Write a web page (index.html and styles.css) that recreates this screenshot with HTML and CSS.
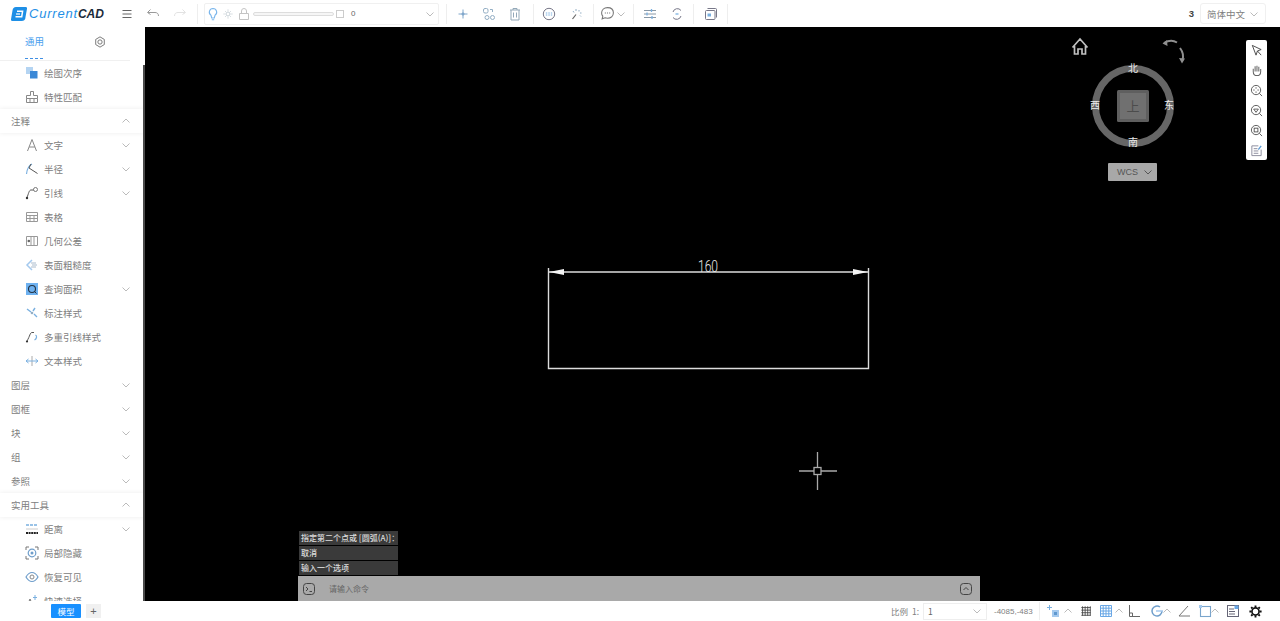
FILE: index.html
```html
<!DOCTYPE html>
<html lang="zh">
<head>
<meta charset="utf-8">
<title>CurrentCAD</title>
<link rel="stylesheet" href="styles.css">
</head>
<body>
<svg class="sprite" width="0" height="0">
  <defs>
    <symbol id="down" viewBox="0 0 10 10"><path d="M1.500 3.500 5 7l3.500-3.500" fill="none" stroke="currentColor"/></symbol>
    <symbol id="up" viewBox="0 0 10 10"><path d="M1.500 6.500 5 3l3.500 3.500" fill="none" stroke="currentColor"/></symbol>
  </defs>
</svg>
<div class="app">
  <header class="topbar">
    <div class="logo">
      <svg class="logo-mark" viewBox="0 0 16 14"><path d="M5 0h9.500a1.500 1.500 0 0 1 1.500 1.800L14.500 10a4 4 0 0 1-4 4H1.500A1.500 1.500 0 0 1 0 12.200L1.500 3.500A4 4 0 0 1 5 0z" fill="#1e8fe6"/><path d="M4.500 9.800h6.200l.9-5.600H6" fill="none" stroke="#fff" stroke-width="1.500"/><path d="M5 7h4" stroke="#fff" stroke-width="1.200"/></svg>
      <span class="logo-a">Current</span><span class="logo-b">CAD</span>
    </div>
    <button class="tool menu"><svg viewBox="0 0 14 14" class="i"><path d="M2.500 3.500h9M2.500 7h9M2.500 10.500h9" stroke="#666" stroke-width="1.100"/></svg></button>
    <button class="tool undo"><svg viewBox="0 0 14 14" class="i"><path d="M4.500 2.500 1.500 5.500l3 2M2 5.500h7c2 0 3.500 1 3.500 3.500" fill="none" stroke="#999"/></svg></button>
    <button class="tool"><svg viewBox="0 0 14 14" class="i"><path d="M9.500 2.500l3 3-3 2M12 5.500H5C3 5.500 1.500 6.500 1.500 9" fill="none" stroke="#e2e2e2"/></svg></button>
    <span class="sep sep-a"></span>
    <div class="layer">
      <svg viewBox="0 0 14 14" class="i"><path d="M7 1.500a3.700 3.700 0 0 0-2 6.800L5.700 11h2.600L9 8.300a3.700 3.700 0 0 0-2-6.800zM5.800 12.800h2.400" fill="none" stroke="#7ab6ec" stroke-width="1.100"/></svg>
      <svg viewBox="0 0 14 14" class="i sun"><path d="M7 1.500v11M1.500 7h11M3.500 3.500l7 7M10.500 3.500l-7 7" stroke="#d2dade"/><circle cx="7" cy="7" r="2" fill="#fff" stroke="#d2dade"/></svg>
      <svg viewBox="0 0 14 14" class="i lock"><path d="M2.500 6.500h9v6h-9zM4.500 6.500V4a2.500 2.500 0 0 1 5 0v2.500" fill="none" stroke="#c4c4c4"/></svg>
      <span class="slider"></span>
      <span class="swatch"></span>
      <span class="layer-name">0</span>
      <svg class="chev layer-chev"><use href="#down"/></svg>
    </div>
    <span class="sep sep-b"></span>
    <button class="tool w26 first"><svg viewBox="0 0 14 14" class="i"><path d="M7 2.500v9M2.500 7h9" stroke="#7fa6cb"/><path d="M5.500 7h3M7 5.500v3" stroke="#7fa6cb" stroke-width="1.600"/></svg></button>
    <button class="tool w26"><svg viewBox="0 0 14 14" class="i"><g fill="none" stroke="#93aec4"><rect x="1.500" y="1.500" width="4.500" height="4.500" rx="1.500"/><circle cx="5" cy="10.500" r="2"/><circle cx="10.500" cy="10.500" r="2"/><path d="M8 2.500h2.500V5"/></g></svg></button>
    <button class="tool w26"><svg viewBox="0 0 14 14" class="i"><path d="M2 3h10M5 3V1.500h4V3M3 3v10h8V3M5.500 5.500v5M8.500 5.500v5" fill="none" stroke="#93a8b8"/></svg></button>
    <span class="sep sep-c"></span>
    <button class="tool w28"><svg viewBox="0 0 14 14" class="i"><circle cx="7" cy="7" r="5.700" fill="none" stroke="#778"/><path d="M3.800 6h6.400M3.800 8h6.400" stroke="#7ab0e0" stroke-dasharray="1.500 1"/></svg></button>
    <button class="tool w28"><svg viewBox="0 0 14 14" class="i"><path d="M6 7.500 2.500 12" stroke="#666" stroke-width="1.200"/><path d="M6 2v2M3 4l1 1.500M9 3v1.500M11.500 6H10M11 9.500l-1-1" stroke="#93aec4"/></svg></button>
    <span class="sep sep-d"></span>
    <button class="tool chat"><svg viewBox="0 0 14 14" class="i big"><path d="M7 1.500c-3.200 0-5.500 2-5.500 5 0 1.200.4 2.200 1.100 3l-.6 2.500 2.700-1c.7.300 1.400.4 2.300.4 3.200 0 5.500-2 5.500-5s-2.300-4.900-5.500-4.900z" fill="none" stroke="#777"/><path d="M4.500 6.500h1M6.500 6.500h1M8.500 6.500h1" stroke="#777"/></svg></button>
    <svg class="chev chat-chev"><use href="#down"/></svg>
    <span class="sep sep-e"></span>
    <button class="tool w26 first-f"><svg viewBox="0 0 14 14" class="i"><path d="M1 3.500h12M1 7h12M1 10.500h12" stroke="#8a98a5"/><path d="M8.500 2v3M4 5.500v3M9 9v3" stroke="#7ab0e0" stroke-width="1.300"/></svg></button>
    <button class="tool w26 second-f"><svg viewBox="0 0 14 14" class="i"><path d="M3 5a4.500 4.500 0 0 1 8-1.500M11 9a4.500 4.500 0 0 1-8 1.500" fill="none" stroke="#778"/><path d="M5.500 7h3" stroke="#7ab0e0" stroke-width="1.300"/></svg></button>
    <span class="sep sep-f"></span>
    <button class="tool w26 first-g"><svg viewBox="0 0 14 14" class="i"><path d="M3.500 1.500h8a1 1 0 0 1 1 1v8" fill="none" stroke="#778"/><rect x="1.500" y="3.500" width="9.500" height="9" rx="1" fill="none" stroke="#778"/><rect x="3.500" y="6.500" width="3.500" height="3" fill="#7ab0e0"/></svg></button>
    <span class="sep sep-g"></span>
    <div class="lang-wrap">
      <span class="count">3</span>
      <div class="lang"><span>简体中文</span><svg class="chev"><use href="#down"/></svg></div>
    </div>
  </header>

  <div class="main">
    <aside class="side">
      <div class="tabs">
        <span class="tab-active">通用</span>
        <svg viewBox="0 0 14 14" class="i tab-gear"><path d="M7 1 12 4v6l-5 3-5-3V4z" fill="none" stroke="#666"/><circle cx="7" cy="7" r="2.500" fill="none" stroke="#666"/></svg>
      </div>
      <div class="item"><svg viewBox="0 0 14 14" class="i"><rect x="1" y="1" width="7" height="7" fill="#b4d4f2"/><rect x="5" y="5" width="7.500" height="7.500" fill="#3a88d6"/></svg><span>绘图次序</span></div>
      <div class="item"><svg viewBox="0 0 14 14" class="i"><path d="M5.500 1.500h3v4h4v3h-11v-3h4zM1.500 8.500v4h11v-4M5 8.500v4M9 8.500v4" fill="none" stroke="#888"/></svg><span>特性匹配</span></div>
      <div class="sec open"><span>注释</span><svg class="chev"><use href="#up"/></svg></div>
      <div class="item"><svg viewBox="0 0 14 14" class="i"><path d="M2.500 13 7 1.500l4.500 11.500M4.200 9h5.600" fill="none" stroke="#888"/></svg><span>文字</span><svg class="chev"><use href="#down"/></svg></div>
      <div class="item"><svg viewBox="0 0 14 14" class="i"><path d="M1.500 12C2 7 4 3.500 7 2" fill="none" stroke="#7ab0e0" stroke-width="1.200"/><path d="M4 6 12.500 11.500M6 2l-2 4" stroke="#555"/></svg><span>半径</span><svg class="chev"><use href="#down"/></svg></div>
      <div class="item"><svg viewBox="0 0 14 14" class="i"><circle cx="10.500" cy="3.500" r="2" fill="none" stroke="#777"/><path d="M8.500 4H6C4 4 3.500 8 2 11.500" fill="none" stroke="#555"/><circle cx="2" cy="12" r="1.200" fill="#333"/></svg><span>引线</span><svg class="chev"><use href="#down"/></svg></div>
      <div class="item"><svg viewBox="0 0 14 14" class="i"><path d="M1.500 2.500h11v9h-11zM1.500 5.500h11M1.500 8.500h11M5 5.500v6M9 5.500v6" fill="none" stroke="#999"/></svg><span>表格</span></div>
      <div class="item"><svg viewBox="0 0 14 14" class="i"><path d="M1.500 2.500h11v9h-11zM6 2.500v9M9 2.500v9" fill="none" stroke="#999"/><circle cx="3.800" cy="7" r="1.300" fill="#666"/></svg><span>几何公差</span></div>
      <div class="item"><svg viewBox="0 0 14 14" class="i"><path d="M7 2 2 7l5 5" fill="none" stroke="#a4c9ee" stroke-width="1.500"/><path d="M6 5h5M7 7h5M6 9h5" stroke="#abc"/></svg><span>表面粗糙度</span></div>
      <div class="item"><svg viewBox="0 0 14 14" class="i"><rect x="1" y="1" width="12" height="12" fill="#6eb1f0"/><circle cx="7" cy="7" r="3.500" fill="none" stroke="#234" stroke-width="1.100"/><path d="M9.500 9.500l2 2" stroke="#234"/></svg><span>查询面积</span><svg class="chev"><use href="#down"/></svg></div>
      <div class="item"><svg viewBox="0 0 14 14" class="i"><path d="M2 3l4 3M9 8l3 3M10 2 8 5" fill="none" stroke="#7ab0e0" stroke-width="1.400"/><circle cx="7" cy="7" r="1.300" fill="#93aec4"/></svg><span>标注样式</span></div>
      <div class="item"><svg viewBox="0 0 14 14" class="i"><path d="M9 2.500H7C5 2.500 5 6 2 11" fill="none" stroke="#555"/><circle cx="2" cy="11.500" r="1.100" fill="#333"/><path d="M10.500 5c2 1 1 4-1 5" fill="none" stroke="#7ab0e0" stroke-width="1.200"/></svg><span>多重引线样式</span></div>
      <div class="item"><svg viewBox="0 0 14 14" class="i"><path d="M7 2v10" stroke="#aaa"/><path d="M1 7h12M3.500 5 1 7l2.500 2M10.500 5 13 7l-2.500 2" fill="none" stroke="#7ab0e0"/></svg><span>文本样式</span></div>
      <div class="sec"><span>图层</span><svg class="chev"><use href="#down"/></svg></div>
      <div class="sec"><span>图框</span><svg class="chev"><use href="#down"/></svg></div>
      <div class="sec"><span>块</span><svg class="chev"><use href="#down"/></svg></div>
      <div class="sec"><span>组</span><svg class="chev"><use href="#down"/></svg></div>
      <div class="sec"><span>参照</span><svg class="chev"><use href="#down"/></svg></div>
      <div class="sec open"><span>实用工具</span><svg class="chev"><use href="#up"/></svg></div>
      <div class="item"><svg viewBox="0 0 14 14" class="i"><path d="M1 3h12" stroke="#7ab0e0" stroke-width="1.500" stroke-dasharray="3 1"/><path d="M1 7h12" stroke="#ccc"/><path d="M1 11h12" stroke="#222" stroke-width="1.800" stroke-dasharray="2 .6"/></svg><span>距离</span><svg class="chev"><use href="#down"/></svg></div>
      <div class="item"><svg viewBox="0 0 14 14" class="i"><path d="M1 4V1h3M10 1h3v3M13 10v3h-3M4 13H1v-3" fill="none" stroke="#777"/><circle cx="7" cy="7" r="3.800" fill="none" stroke="#6f9ecb" stroke-width="1.200"/><circle cx="7" cy="7" r="1.500" fill="#6f9ecb"/></svg><span>局部隐藏</span></div>
      <div class="item"><svg viewBox="0 0 14 14" class="i"><path d="M1 7c2-3.500 4-4.500 6-4.500S11 3.500 13 7c-2 3.500-4 4.500-6 4.500S3 10.500 1 7z" fill="none" stroke="#6f9ecb" stroke-width="1.200"/><circle cx="7" cy="7" r="2" fill="none" stroke="#888"/></svg><span>恢复可见</span></div>
      <div class="item"><svg viewBox="0 0 14 14" class="i"><path d="M2 12 5 5l3 7" fill="none" stroke="#777"/><path d="M10 1v5M8 3.500h4" stroke="#7ab0e0"/></svg><span>快速选择</span></div>
      <span class="thumb"></span>
    </aside>

    <main class="canvas">
      <svg class="drawing" viewBox="0 0 1135 574">
        <g stroke="#dcdcdc" stroke-width="1.400" fill="none">
          <path d="M403.500 241v100.500H723.500V241"/>
          <path d="M403.500 245H723.500"/>
        </g>
        <path d="M404 245l15-3v6zM723 245l-15-3v6z" fill="#f4f4f4"/>
        <text x="553" y="244.500" class="dim" textLength="20" lengthAdjust="spacingAndGlyphs">160</text>
        <g stroke="#a9a9a9" stroke-width="1.300" fill="none">
          <path d="M654 444h15M676 444h16M672.500 425v15M672.500 448v15"/>
          <rect x="669" y="440.500" width="7" height="7"/>
        </g>
        <g fill="none" stroke="#c0c0c0" stroke-width="1.700">
          <path d="M927.500 20.500 935 12l7.500 8.500M929.500 19v8h3.500v-5h4v5h3.500v-8"/>
        </g>
        <g fill="none" stroke="#8f8f8f" stroke-width="2">
          <path d="M1019 16c5-3 9-3 13-.5"/>
          <path d="M1035 21c3 4 4 7 2.500 12"/>
        </g>
        <path d="M1017.500 16.500l4.500-3.500 .5 6zM1037 36.500l-3-5.500 6 .5z" fill="#8f8f8f"/>
        <circle cx="988" cy="79" r="37.500" fill="none" stroke="#666" stroke-width="7"/>
        <rect x="972" y="63" width="32" height="32" rx="1.500" fill="#5f5f5f"/>
        <rect x="975" y="66" width="26" height="26" fill="#707070"/>
      </svg>

      <span class="compass top">上</span>
      <span class="compass n">北</span>
      <span class="compass s">南</span>
      <span class="compass w">西</span>
      <span class="compass e">东</span>
      <div class="wcs"><span>WCS</span><svg class="chev"><use href="#down"/></svg></div>

      <div class="viewbar">
        <svg viewBox="0 0 14 14" class="i"><path d="M2.500 1.500 12 6 8 7.500 6.500 12z" fill="none" stroke="#444"/><path d="M8 7.500l4 4.500" stroke="#444"/></svg>
        <svg viewBox="0 0 14 14" class="i"><path d="M3.500 9V5M5.500 8V2.500M7.500 8V2M9.500 8V3M11.500 9V5.500M3.500 8c0 3 1.500 4.500 4 4.500s4-1.500 4-4.500" fill="none" stroke="#666" stroke-width="1.100"/></svg>
        <svg viewBox="0 0 14 14" class="i"><circle cx="6.500" cy="6.500" r="5" fill="none" stroke="#555"/><path d="M10 10l3 3" stroke="#555"/><path d="M6.500 3.500v1.500M6.500 8v1.500M3.500 6.500H5M8 6.500h1.500" stroke="#555"/></svg>
        <svg viewBox="0 0 14 14" class="i"><circle cx="6.500" cy="6.500" r="5" fill="none" stroke="#555"/><path d="M10 10l3 3" stroke="#555"/><path d="M4 5.500 6.500 9 9 5.500z" fill="none" stroke="#555"/></svg>
        <svg viewBox="0 0 14 14" class="i"><circle cx="6.500" cy="6.500" r="5" fill="none" stroke="#555"/><path d="M10 10l3 3" stroke="#555"/><rect x="4.500" y="4.500" width="4" height="4" fill="none" stroke="#555"/></svg>
        <svg viewBox="0 0 14 14" class="i"><path d="M12 6v6.500H2V2h7M4 5h4M4 7.500h5M4 10h5" fill="none" stroke="#889"/><path d="M9 6l3-4" stroke="#5b9ad5" stroke-width="1.400"/></svg>
      </div>

      <div class="console">
        <div class="log">指定第二个点或 [圆弧(A)]：</div>
        <div class="log">取消</div>
        <div class="log">输入一个选项</div>
        <div class="prompt">
          <svg viewBox="0 0 14 14" class="i"><rect x="1.500" y="1.500" width="11" height="11" rx="3" fill="none" stroke="#444"/><path d="M4 5l2 2-2 2M7.500 9.500h2.500" fill="none" stroke="#444"/></svg>
          <span class="prompt-text">请输入命令</span>
          <svg viewBox="0 0 14 14" class="i prompt-up"><rect x="1.500" y="1.500" width="11" height="11" rx="3" fill="none" stroke="#444"/><path d="M4.500 8 7 5.500 9.500 8" fill="none" stroke="#444"/></svg>
        </div>
      </div>
    </main>
  </div>

  <footer class="status">
    <span class="model">模型</span>
    <span class="add">+</span>
    <div class="status-right">
      <span class="scale-label">比例&nbsp; 1:</span>
      <div class="scale"><span>1</span><svg class="chev"><use href="#down"/></svg></div>
      <span class="coords">-4085,-483</span>
      <span class="status-sep"></span>
      <svg viewBox="0 0 14 14" class="i s1"><path d="M1 3.500h5M3.500 1v5" stroke="#7ab0e0"/><rect x="6" y="6" width="7" height="7" fill="#a4c9ee"/><rect x="8" y="8" width="3" height="3" fill="#5f98cf"/></svg>
      <svg class="chev c1"><use href="#up"/></svg>
      <svg viewBox="0 0 14 14" class="i s2"><path d="M1.500 3h11M1.500 6h11M1.500 9h11M1.500 12h11M3 1.500v11M6 1.500v11M9 1.500v11M12 1.500v11" stroke="#444"/></svg>
      <svg viewBox="0 0 14 14" class="i s3"><path d="M1.500 1.500h11v11h-11zM1.500 4.200h11M1.500 7h11M1.500 9.800h11M4.200 1.500v11M7 1.500v11M9.800 1.500v11" fill="none" stroke="#69a7e6"/></svg>
      <svg class="chev c3"><use href="#up"/></svg>
      <svg viewBox="0 0 14 14" class="i s4"><path d="M2.500 1v11.500H13M2.500 9h3v3.500" fill="none" stroke="#666"/></svg>
      <svg viewBox="0 0 14 14" class="i s5"><path d="M12 7a5 5 0 1 1-2-4" fill="none" stroke="#6f9ecb" stroke-width="1.500"/><path d="M6 7h7" stroke="#a4c9ee" stroke-width="1.500"/></svg>
      <svg class="chev c5"><use href="#up"/></svg>
      <svg viewBox="0 0 14 14" class="i s6"><path d="M11 2 2 12h11" fill="none" stroke="#777"/></svg>
      <svg viewBox="0 0 14 14" class="i s7"><rect x="2.500" y="2.500" width="10" height="10" fill="none" stroke="#7aa5cc" stroke-width="1.100"/><rect x="1" y="1" width="3" height="3" fill="#a4c9ee"/></svg>
      <svg class="chev c7"><use href="#up"/></svg>
      <svg viewBox="0 0 14 14" class="i s8"><rect x="1.500" y="1.500" width="11" height="11" fill="none" stroke="#667"/><path d="M3 5h5M3 7.500h6M3 10h6" stroke="#667"/><rect x="8.500" y="1.500" width="4" height="3.500" fill="#69a7e6"/></svg>
      <svg viewBox="0 0 16 16" class="i s9"><path d="M8 1.500v2M8 12.500v2M1.500 8h2M12.500 8h2M3.400 3.400l1.400 1.400M11.200 11.200l1.400 1.400M12.600 3.400l-1.400 1.400M4.800 11.200l-1.400 1.400" stroke="#111" stroke-width="2"/><circle cx="8" cy="8" r="3.800" fill="none" stroke="#111" stroke-width="1.800"/></svg>
    </div>
  </footer>
</div>
</body>
</html>
```
FILE: styles.css
```css
* { box-sizing: border-box; }
html, body { margin: 0; height: 100%; overflow: hidden; }
body { font-family: "Noto Sans CJK SC", "Liberation Sans", sans-serif; color: #666; background: #fff; }
.sprite { display: block; position: absolute; }
.app { display: flex; flex-direction: column; height: 621px; }
.i { width: 14px; height: 14px; flex: none; display: block; }
.chev { width: 10px; height: 10px; flex: none; color: #bbb; display: block; }

.topbar { height: 27px; flex: none; display: flex; align-items: center; padding-left: 11px; background: #fff; }
.logo { width: 93px; display: flex; align-items: center; font-family: "Liberation Sans", sans-serif; font-style: italic; font-size: 13px; letter-spacing: .8px; }
.logo-mark { width: 16px; height: 14px; margin-right: 2px; flex: none; }
.logo-a { color: #1e8fe6; }
.logo-b { color: #1b2a3a; font-weight: 700; font-size: 12px; letter-spacing: 0; }
.tool { border: 0; background: none; padding: 0; height: 20px; display: flex; align-items: center; justify-content: center; flex: none; }
.menu { width: 18px; margin-left: 14px; }
.undo { margin-left: 4px; }
.undo, .undo + .tool { width: 26px; }
.undo + .tool { margin-left: 1px; }
.sep { width: 1px; height: 20px; background: #eee; flex: none; }
.sep-a { margin-left: 4px; }
.sep-b { margin-left: 7px; }
.sep-c { margin-left: 5px; }
.sep-d { margin-left: 2px; }
.sep-e { margin-left: 7px; }
.sep-f { margin-left: 3px; }
.sep-g { margin-left: 3px; }
.w26 { width: 26px; }
.w28 { width: 28px; }
.first { margin-left: 3px; }
.sep-c + .w28 { margin-left: 1px; }
.first-f { margin-left: 3px; }
.second-f { margin-left: 1px; }
.first-g { margin-left: 4px; }
.layer { margin-left: 6px; width: 235px; height: 22px; border: 1px solid #f0f0f0; border-radius: 2px; display: flex; align-items: center; padding-left: 1px; }
.sun { width: 12px; height: 12px; margin-left: 2px; }
.lock { margin-left: 3px; }
.slider { width: 81px; height: 4px; margin-left: 2px; border: 1px solid #ddd; border-radius: 2px; background: #f6f6f6; flex: none; }
.swatch { width: 8px; height: 8px; border: 1px solid #ccc; margin-left: 2px; flex: none; }
.layer-name { font-size: 8px; margin-left: 7px; font-family: "Liberation Sans", sans-serif; color: #666; flex: 1; }
.layer-chev { margin-right: 3px; }
.chat { width: 20px; margin-left: 3px; }
.big { width: 15px; height: 15px; }
.chat-chev { margin-left: -1px; }
.lang-wrap { margin-left: auto; margin-right: 14px; display: flex; align-items: center; }
.count { font-family: "Liberation Sans", sans-serif; font-size: 9.500px; font-weight: 700; color: #444; margin-right: 6px; }
.lang { width: 66px; height: 21px; border: 1px solid #f0f0f0; border-radius: 3px; display: flex; align-items: center; justify-content: space-between; padding: 0 6px; font-size: 9.500px; color: #808080; }

.main { flex: 1; display: flex; min-height: 0; }
.side { width: 145px; flex: none; position: relative; overflow: hidden; background: #fff; }
.thumb { position: absolute; right: 0; top: 38px; width: 2px; height: 546px; background: #4a4a4a; }
.tabs { height: 34px; margin-right: 15px; border-bottom: 1px solid #f0f0f0; display: flex; align-items: flex-start; padding-left: 25px; }
.tab-active { font-size: 9.500px; color: #4aa0ee; width: 18px; white-space: nowrap; height: 32px; line-height: 29px; border-bottom: 1px dashed #3f8fe4; }
.tab-gear { margin: 9px 0 0 51px; width: 12px; height: 12px; }
.item { height: 24px; display: flex; align-items: center; padding: 0 14px 0 25px; font-size: 9.500px; color: #808080; }
.item span { margin-left: 5px; flex: 1; white-space: nowrap; }
.sec { height: 24px; display: flex; align-items: center; justify-content: space-between; padding: 0 14px 0 11px; font-size: 9.500px; color: #808080; background: #fff; }
.sec.open { box-shadow: 0 0 5px rgba(0, 0, 0, .08); position: relative; margin-right: 2px; padding-right: 12px; }

.canvas { flex: 1; background: #000; position: relative; overflow: hidden; min-width: 0; }
.drawing { position: absolute; inset: 0; width: 100%; height: 100%; display: block; }
.dim { font-family: "Roboto", "Liberation Sans", sans-serif; font-weight: 300; font-size: 16px; fill: #ececec; }
.compass { position: absolute; font-size: 10px; line-height: 12px; width: 12px; text-align: center; color: #ececec; }
.compass.top { left: 981px; top: 70px; font-size: 13px; line-height: 18px; width: 14px; color: #4c4c4c; }
.compass.n { left: 982px; top: 35px; }
.compass.s { left: 982px; top: 109px; }
.compass.w { left: 944px; top: 72px; }
.compass.e { left: 1018px; top: 72px; }
.wcs { position: absolute; left: 963px; top: 136px; width: 49px; height: 18px; background: #a8a8a8; display: flex; align-items: center; justify-content: space-between; padding: 0 4px 0 9px; font: 9px "Liberation Sans", sans-serif; color: #555; border-radius: 1px; }
.wcs .chev { color: #555; }
.viewbar { position: absolute; left: 1101px; top: 13px; width: 21px; height: 120px; background: #fff; border-radius: 2px; display: flex; flex-direction: column; align-items: center; justify-content: space-around; }
.viewbar .i { width: 13px; height: 13px; }
.console { position: absolute; left: 153px; bottom: 0; width: 682px; font-size: 8px; color: #ddd; }
.log { width: 99px; height: 14px; line-height: 14px; margin: 0 0 1px 1px; padding-left: 2px; background: #3a3a3a; white-space: nowrap; overflow: hidden; font-weight: 500; }
.prompt { height: 25px; margin-top: 1px; background: #a9a9a9; display: flex; align-items: center; padding: 0 7px 0 4px; color: #666; }
.prompt-text { margin-left: 13px; flex: 1; }
.prompt-up { flex: none; }

.status { height: 20px; flex: none; background: #fff; display: flex; align-items: center; padding-left: 51px; }
.model { width: 30px; height: 14px; background: #1890ff; color: #fff; font-size: 8.500px; line-height: 14px; text-align: center; border-radius: 1px; }
.add { width: 15px; height: 14px; margin-left: 5px; background: #f0f0f0; color: #666; font: 11px/14px "Liberation Sans", sans-serif; text-align: center; }
.status-right { margin-left: auto; display: flex; align-items: center; font-size: 8.500px; color: #808080; padding-right: 17px; }
.scale-label { margin-right: 4px; white-space: nowrap; }
.scale { width: 64px; height: 17px; border: 1px solid #eee; display: flex; align-items: center; justify-content: space-between; padding: 0 4px; color: #666; }
.coords { margin-left: 7px; font-family: "Liberation Sans", sans-serif; font-size: 8px; width: 45px; white-space: nowrap; }
.status-sep { width: 1px; height: 18px; background: #eee; }
.s1 { margin-left: 6px; }
.c1 { margin-left: 3px; }
.s2 { margin-left: 7px; width: 12px; height: 12px; }
.s3 { margin-left: 7px; }
.c3 { margin-left: 1px; }
.s4 { margin-left: 3px; }
.s5 { margin-left: 9px; }
.c5 { margin-left: -2px; }
.s6 { margin-left: 5px; }
.s7 { margin-left: 7px; }
.c7 { margin-left: -2px; }
.s8 { margin-left: 6px; }
.s9 { margin-left: 8px; width: 15px; height: 15px; }
```
